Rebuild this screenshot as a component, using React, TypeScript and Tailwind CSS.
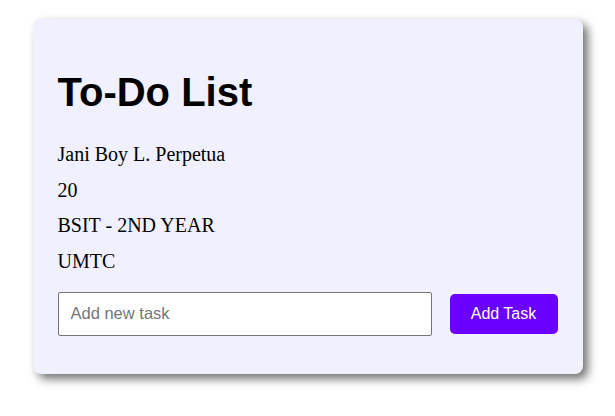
import React from "react";

export default function App() {
  return (
    <div className="w-[615px] h-[416px] bg-white overflow-hidden">
      <div className="mx-auto mt-[19px] w-[550px] rounded-[8px] bg-[#f0f0fe] px-[25px] pt-[25px] pb-[38px] shadow-[5px_5px_10px_rgba(0,0,0,0.55)]">
        <h1 className="mt-[26px] text-[40px] leading-[45px] font-bold text-black [font-family:'Liberation_Sans',Arial,sans-serif]">
          To-Do List
        </h1>
        <div className="mt-[28px] flex flex-col gap-[12.5px] text-[20px] leading-[23px] text-black [font-family:'Liberation_Serif','Times_New_Roman',serif]">
          <p>Jani Boy L. Perpetua</p>
          <p>20</p>
          <p>BSIT - 2ND YEAR</p>
          <p>UMTC</p>
        </div>
        <div className="mt-[19px] flex items-center gap-[18px] [font-family:'Liberation_Sans',Arial,sans-serif]">
          <input
            type="text"
            placeholder="Add new task"
            className="h-[44px] w-[374px] rounded-[2px] border border-[#767676] bg-white px-[12px] text-[16.5px] text-black placeholder:text-[#757575] outline-none"
          />
          <button className="h-[40px] w-[108px] rounded-[5px] bg-[#6a00ff] text-[16px] text-white">
            Add Task
          </button>
        </div>
      </div>
    </div>
  );
}
